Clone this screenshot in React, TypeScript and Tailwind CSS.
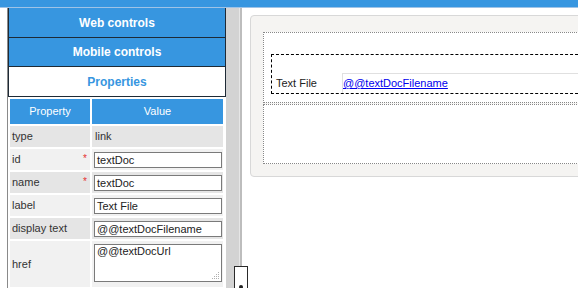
import React from "react";

const rows: { k: string; v: string; req?: boolean; input?: boolean; area?: boolean }[] = [
  { k: "type", v: "link" },
  { k: "id", v: "textDoc", req: true, input: true },
  { k: "name", v: "textDoc", req: true, input: true },
  { k: "label", v: "Text File", input: true },
  { k: "display text", v: "@@textDocFilename", input: true },
  { k: "href", v: "@@textDocUrl", area: true },
];

export default function App() {
  return (
    <div
      className="relative w-[578px] h-[288px] overflow-hidden bg-white text-[11px] text-[#333]"
      style={{ fontFamily: '"Liberation Sans", Arial, sans-serif' }}
    >
      <div className="h-[8px] bg-[#3796e0] border-b border-[#9fc3e6]" />
      <div className="flex h-[280px]">
        <div className="w-[7px] shrink-0 bg-white" />
        <div className="w-[219px] shrink-0 border-l border-[#8a8a8a] bg-white flex flex-col">
          <div className="h-[30px] shrink-0 bg-[#3796e0] border-l border-r border-b border-[#1e2a36] flex items-center justify-center text-white font-bold text-[12px]">
            Web controls
          </div>
          <div className="h-[29px] shrink-0 bg-[#3796e0] border-l border-r border-b border-[#1e2a36] flex items-center justify-center text-white font-bold text-[12px]">
            Mobile controls
          </div>
          <div className="h-[30px] shrink-0 bg-white border-l border-r border-b border-[#1e2a36] flex items-center justify-center text-[#3796e0] font-bold text-[12px]">
            Properties
          </div>
          <table className="border-separate border-spacing-[2px] w-[217px] table-fixed">
            <colgroup>
              <col className="w-[80px]" />
              <col />
            </colgroup>
            <thead>
              <tr className="h-[25px]">
                <th className="bg-[#3796e0] text-white font-normal text-[11px] p-0">Property</th>
                <th className="bg-[#3796e0] text-white font-normal text-[11px] p-0">Value</th>
              </tr>
            </thead>
            <tbody>
              {rows.map((r, i) => {
                const bg = i % 2 === 0 ? "bg-[#e5e5e5]" : "bg-[#f1f1f1]";
                return (
                  <tr key={r.k} className={r.area ? "h-[46px]" : "h-[21px]"}>
                    <td className={`${bg} relative p-0 pl-[2px] align-middle`}>
                      {r.k}
                      {r.req && (
                        <span className="absolute right-[3px] top-[2px] text-[#e53030] text-[10px]">*</span>
                      )}
                    </td>
                    <td className={`${bg} p-0 pl-[2px] pr-[1px] ${r.area ? "align-top pt-[3px]" : "align-middle"}`}>
                      {r.input ? (
                        <div className="h-[16px] w-[128px] bg-white border border-[#7a7a7a] pl-[2px] leading-[14px] text-[11px] text-[#222]">
                          {r.v}
                        </div>
                      ) : r.area ? (
                        <div className="relative h-[38px] w-[128px] bg-white border border-[#7a7a7a] pl-[2px] leading-[12px] text-[11px] text-[#222]">
                          {r.v}
                          <svg className="absolute right-[1px] bottom-[1px]" width="8" height="8" viewBox="0 0 8 8">
                            <g fill="#b0b0b0">
                              <rect x="6" y="0" width="1" height="1" />
                              <rect x="4" y="2" width="1" height="1" />
                              <rect x="6" y="2" width="1" height="1" />
                              <rect x="2" y="4" width="1" height="1" />
                              <rect x="4" y="4" width="1" height="1" />
                              <rect x="6" y="4" width="1" height="1" />
                              <rect x="0" y="6" width="1" height="1" />
                              <rect x="2" y="6" width="1" height="1" />
                              <rect x="4" y="6" width="1" height="1" />
                              <rect x="6" y="6" width="1" height="1" />
                            </g>
                          </svg>
                        </div>
                      ) : (
                        <span className="pl-[1px]">{r.v}</span>
                      )}
                    </td>
                  </tr>
                );
              })}
            </tbody>
          </table>
        </div>
        <div className="w-[13px] shrink-0 bg-[#d3d3d3]" />
        <div className="w-[1px] shrink-0 bg-[#e6e6e6]" />
        <div className="w-[2px] shrink-0 bg-[#bdbdbd]" />
        <div className="flex-1 min-w-0 pl-[8px] pt-[7px]">
          <div className="w-[340px] h-[162px] bg-[#f5f4f2] border border-[#d8d8d8] rounded-[4px] pl-[12px] pt-[16px]">
            <div className="h-[71px] bg-white border border-dotted border-[#888] pl-[7px] pt-[21px]">
              <div className="h-[40px] border border-dashed border-black pt-[18px]">
                <div className="flex h-[20px]">
                  <div className="w-[70px] shrink-0 pl-[4px] leading-[20px] text-[11px] text-[#222]">Text File</div>
                  <div className="flex-1 border-t border-l border-[#e0e0e0] leading-[18px]">
                    <span className="text-[#0000ee] underline text-[11px]">@@textDocFilename</span>
                  </div>
                </div>
              </div>
            </div>
            <div className="mt-[1px] h-[60px] bg-white border border-dotted border-[#888]" />
          </div>
        </div>
      </div>
      <div className="absolute left-[234px] top-[266px] w-[14px] h-[30px] bg-white border border-[#2a2a2a]">
        <div className="absolute left-[4px] top-[18px] w-[4px] h-[4px] rounded-full bg-[#222]" />
      </div>
    </div>
  );
}
